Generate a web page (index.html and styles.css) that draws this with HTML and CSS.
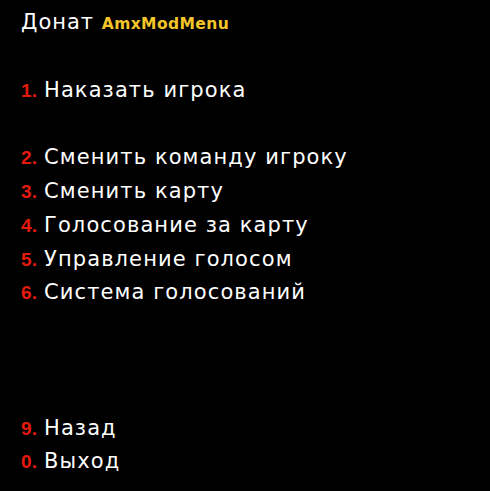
FILE: index.html
```html
<!DOCTYPE html>
<html>
<head>
<meta charset="utf-8">
<link rel="stylesheet" href="styles.css">
</head>
<body>
<div class="menu">
  <div class="line title">Донат <span class="brand">AmxModMenu</span></div>
  <div class="line blank"></div>
  <div class="line"><span class="num">1.</span>Наказать игрока</div>
  <div class="line blank"></div>
  <div class="line"><span class="num">2.</span>Сменить команду игроку</div>
  <div class="line"><span class="num">3.</span>Сменить карту</div>
  <div class="line"><span class="num">4.</span>Голосование за карту</div>
  <div class="line"><span class="num">5.</span>Управление голосом</div>
  <div class="line"><span class="num">6.</span>Система голосований</div>
  <div class="line blank"></div>
  <div class="line blank"></div>
  <div class="line blank"></div>
  <div class="line"><span class="num">9.</span>Назад</div>
  <div class="line"><span class="num">0.</span>Выход</div>
</div>
</body>
</html>
```
FILE: styles.css
```css
html, body {
  margin: 0;
  padding: 0;
  background: #000;
  width: 490px;
  height: 491px;
  overflow: hidden;
}
.menu {
  padding: 6px 0 0 21px;
  font-family: "DejaVu Sans", sans-serif;
  color: #fff;
  font-size: 21px;
  letter-spacing: 1.1px;
}
.line {
  height: 33.8px;
  line-height: 33.8px;
  white-space: nowrap;
}
.title {
  letter-spacing: 1px;
}
.brand {
  color: #f5c62a;
  font-weight: bold;
  font-size: 15.5px;
  letter-spacing: 0.4px;
}
.num {
  display: inline-block;
  width: 23px;
  color: #e41a0e;
  font-family: "Liberation Sans", Arial, sans-serif;
  font-weight: bold;
  font-size: 19px;
  letter-spacing: 0.3px;
}
```
